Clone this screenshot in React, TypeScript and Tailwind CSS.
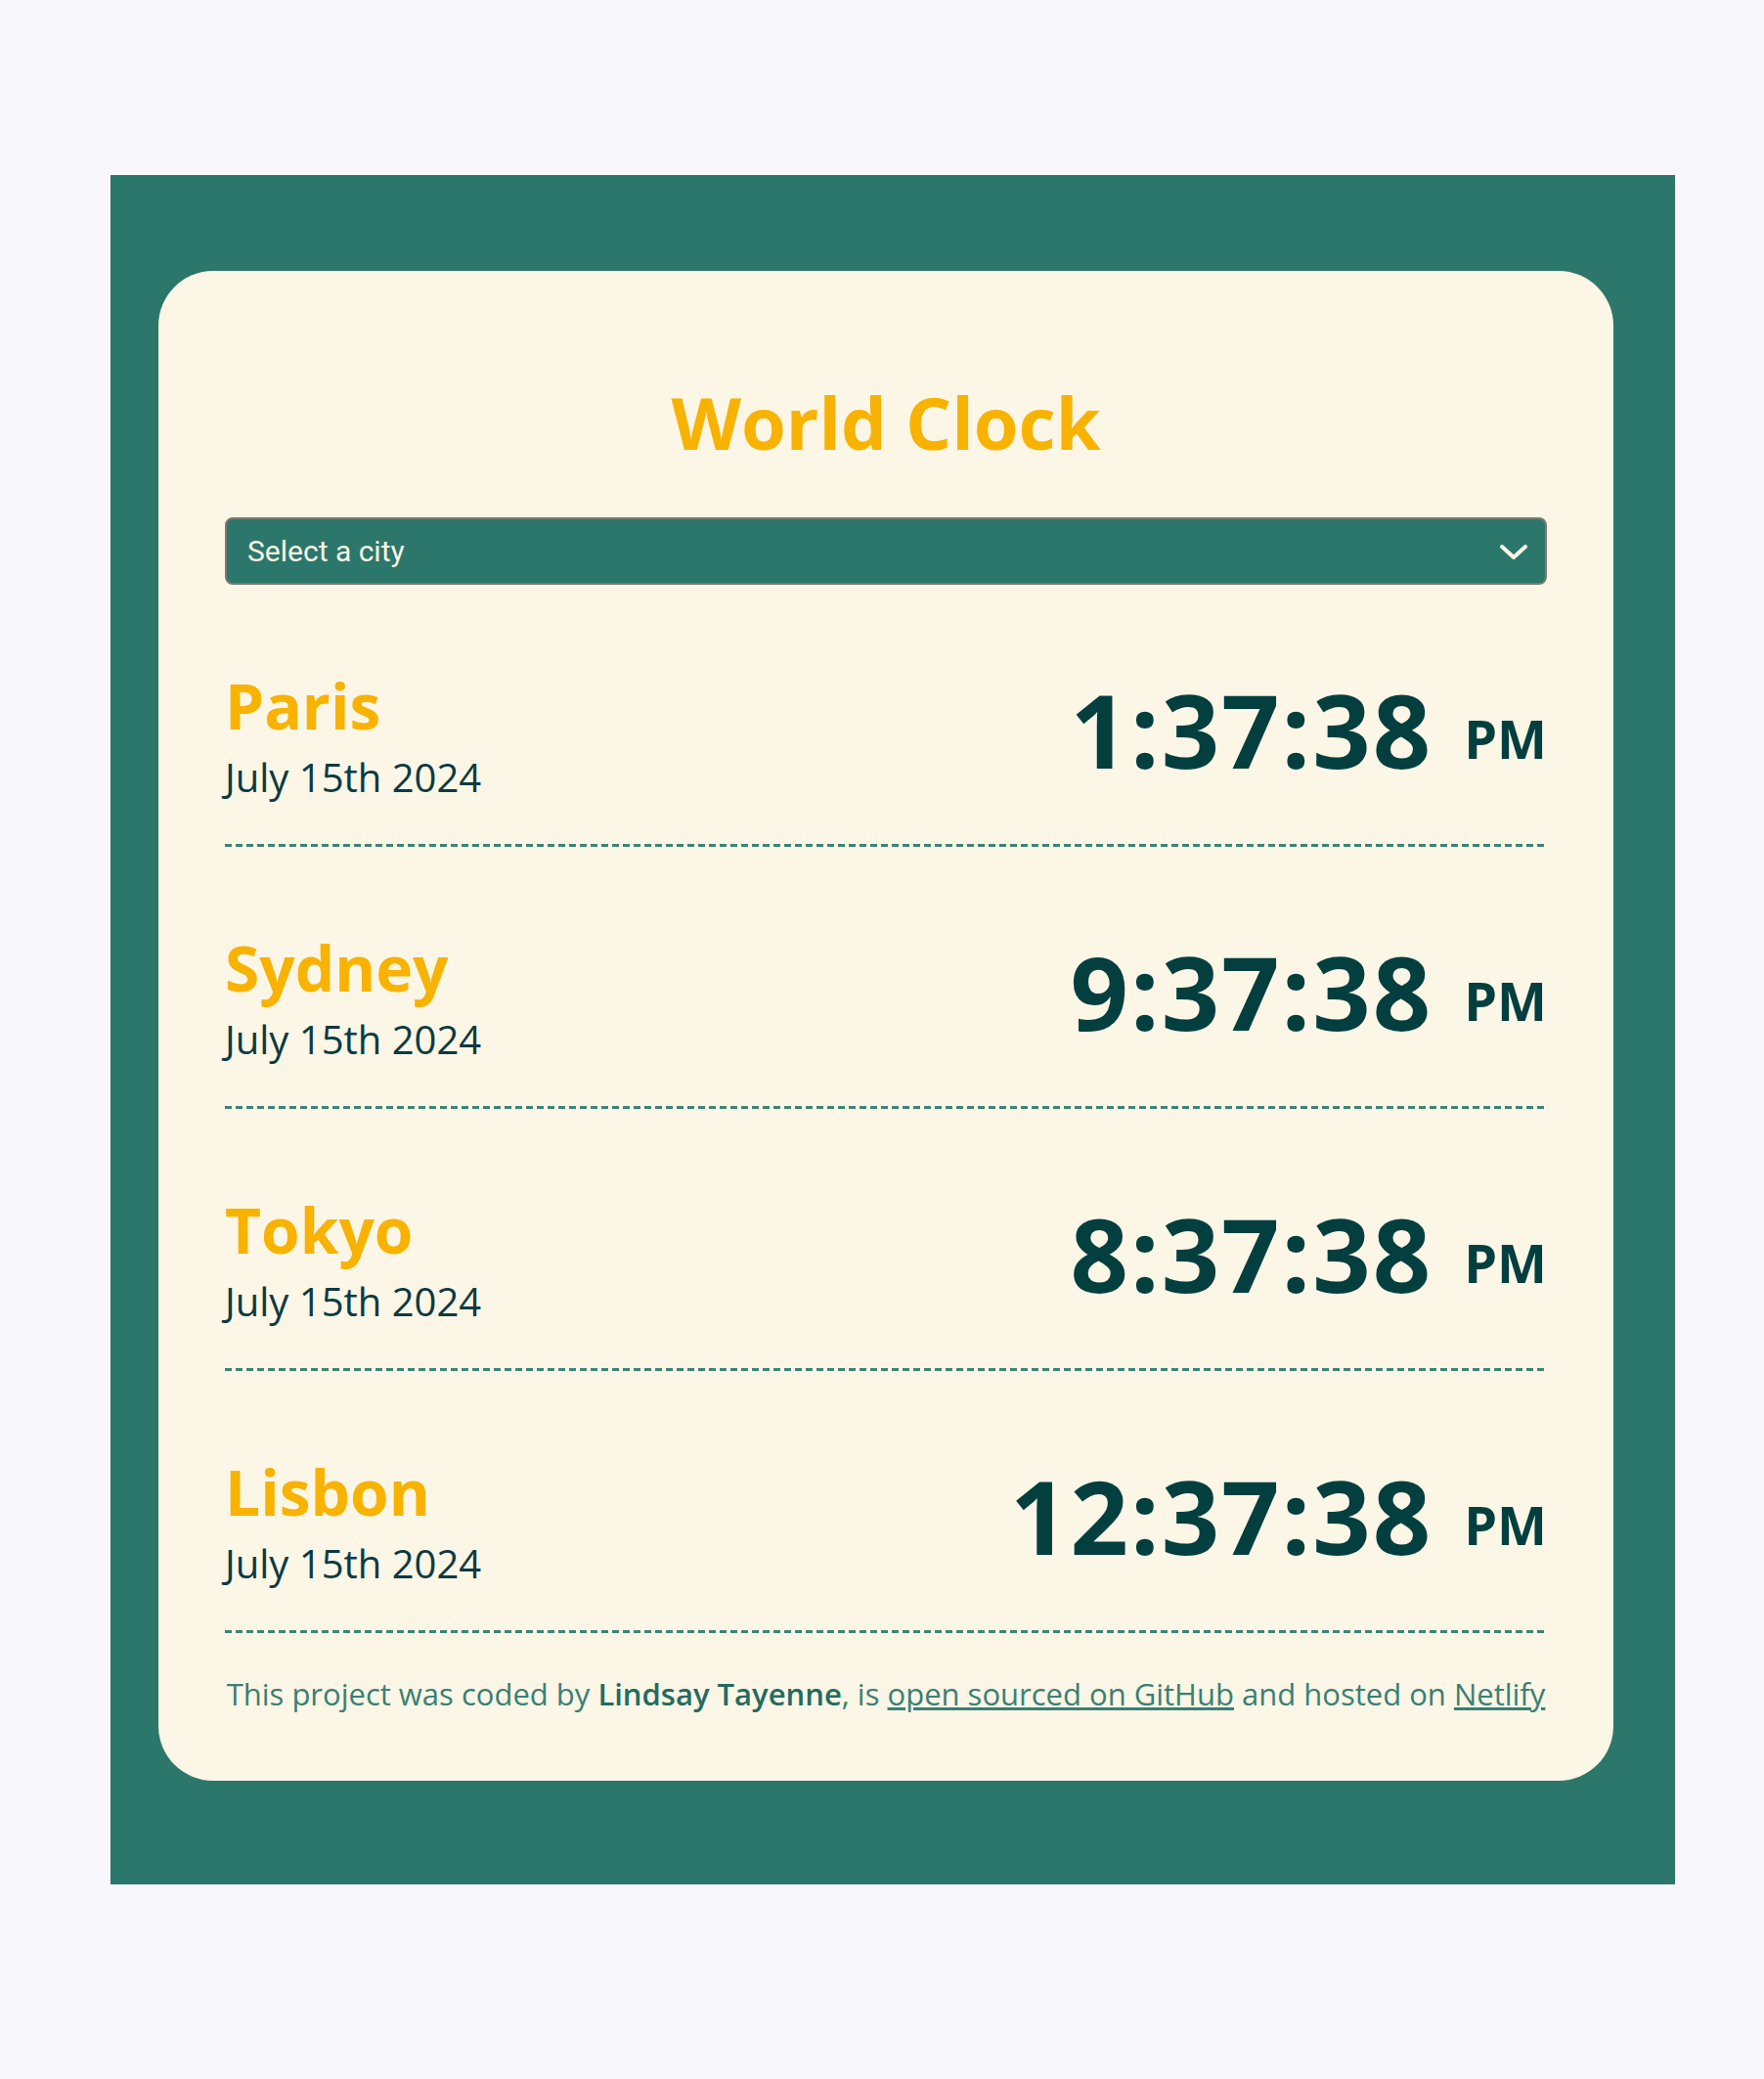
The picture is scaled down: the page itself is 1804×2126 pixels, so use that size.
import { ChangeEvent, useState } from 'react';

interface CityRow {
  name: string;
  date: string;
  time: string;
  period: string;
}

const cities: CityRow[] = [
  { name: 'Paris', date: 'July 15th 2024', time: '1:37:38', period: 'PM' },
  { name: 'Sydney', date: 'July 15th 2024', time: '9:37:38', period: 'PM' },
  { name: 'Tokyo', date: 'July 15th 2024', time: '8:37:38', period: 'PM' },
  { name: 'Lisbon', date: 'July 15th 2024', time: '12:37:38', period: 'PM' },
];

function CityLine({ city }: { city: CityRow }) {
  return (
    <div className="pt-[92px]">
      <div className="flex justify-between items-start pb-[48px]">
        <div>
          <h2 className="text-[64px] leading-[64px] font-bold text-[#f8b200]">{city.name}</h2>
          <div className="mt-[21px] text-[40px] leading-[40px] text-[#0d3a42]">{city.date}</div>
        </div>
        <div className="flex items-start text-[#033f3f] pt-[4px]">
          <span className="text-[104px] leading-[104px] font-bold tracking-[2px]">{city.time}</span>
          <span className="ml-[32px] mt-[34px] text-[54px] leading-[54px] font-bold">{city.period}</span>
        </div>
      </div>
      {/* dashed divider */}
      <div className="h-[3px] bg-[repeating-linear-gradient(to_right,#3b8577_0_7px,transparent_7px_11px)]" />
    </div>
  );
}

export default function App() {
  const [city, setCity] = useState('');

  return (
    <div className="min-h-[2126px] bg-[#f7f7fc] pt-[179px] font-['Open_Sans',sans-serif]">
      <div className="ml-[113px] w-[1600px] h-[1748px] bg-[#2c776b] pt-[98px] pl-[49px]">
        <div className="w-[1488px] h-[1544px] rounded-[56px] bg-[#fcf6e6] px-[68px] pt-[118px]">
          <h1 className="text-center text-[74px] leading-[74px] font-bold text-[#f8b200]">World Clock</h1>

          {/* city picker */}
          <div className="relative mt-[60px]">
            <select
              value={city}
              onChange={(e: ChangeEvent<HTMLSelectElement>) => setCity(e.target.value)}
              className="appearance-none w-full h-[69px] rounded-[8px] border-2 border-[#7a7a72] bg-[#2c776b] pl-[21px] text-[30px] text-[#fcf6e6] font-['Roboto',sans-serif] outline-none"
            >
              <option value="">Select a city</option>
              <option value="paris">Paris</option>
              <option value="sydney">Sydney</option>
              <option value="tokyo">Tokyo</option>
              <option value="lisbon">Lisbon</option>
            </select>
            <svg
              className="absolute right-[20px] top-[28px] pointer-events-none"
              width="28"
              height="16"
              viewBox="0 0 28 16"
              fill="none"
            >
              <polyline points="2,2 14,13 26,2" stroke="#fcf6e6" strokeWidth="4" strokeLinecap="round" strokeLinejoin="round" />
            </svg>
          </div>

          {cities.map(c => (
            <CityLine key={c.name} city={c} />
          ))}

          <p className="mt-[47px] text-center text-[31px] leading-[30px] text-[#3a8073]">
            This project was coded by <strong className="font-semibold text-[#236b60]">Lindsay Tayenne</strong>, is{' '}
            <a href="#" className="underline">open sourced on GitHub</a> and hosted on{' '}
            <a href="#" className="underline">Netlify</a>
          </p>
        </div>
      </div>
    </div>
  );
}
